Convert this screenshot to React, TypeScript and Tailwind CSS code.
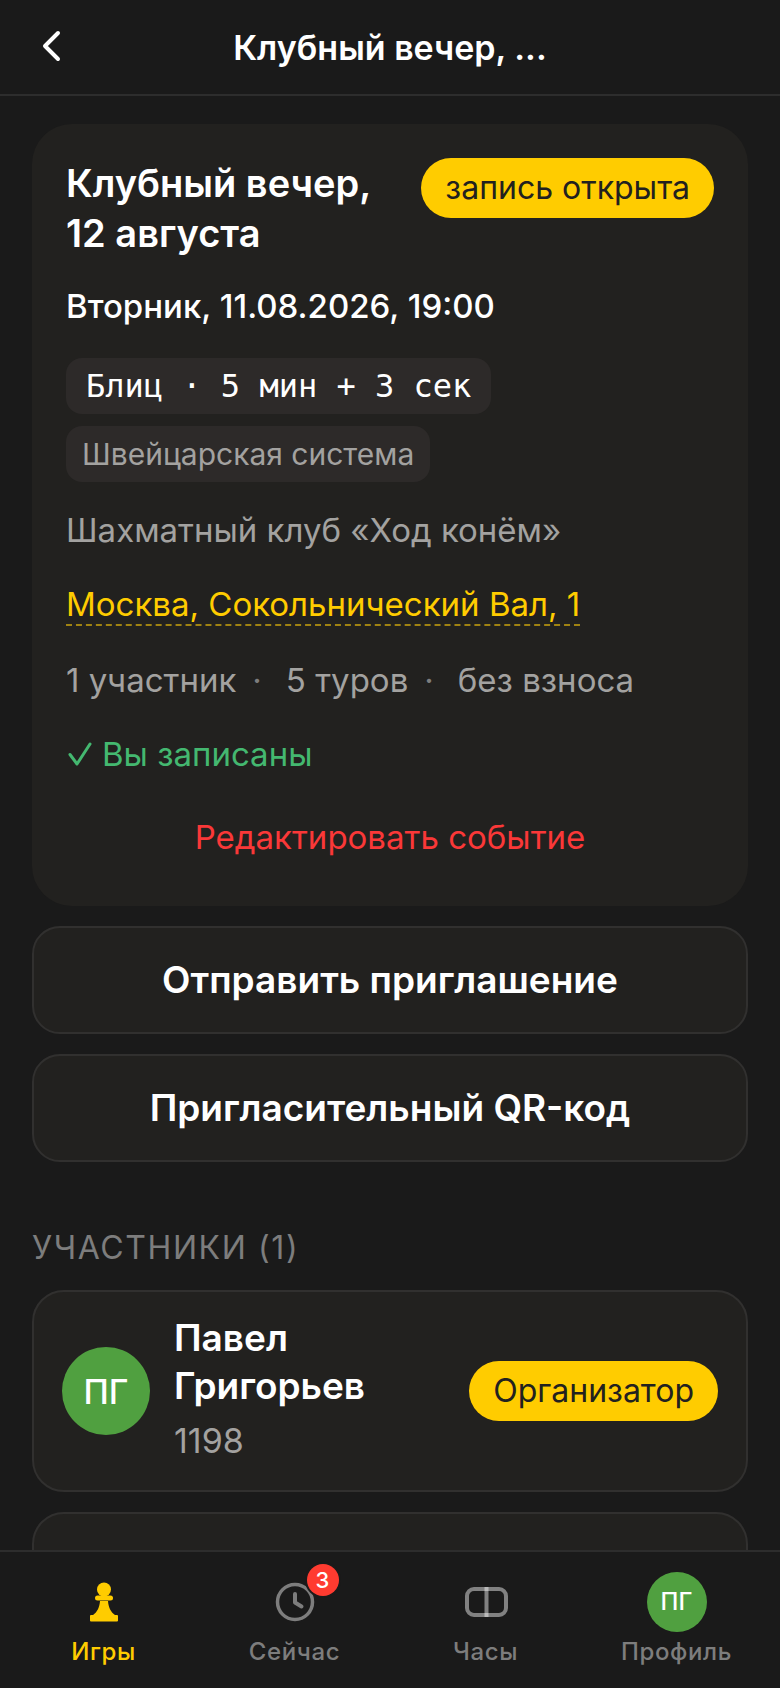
import type { ReactNode } from "react";

type Tab = {
    label: string;
    icon: ReactNode;
    active?: boolean;
    badge?: number;
};

function PawnIcon() {
    return (
        <svg width="48" height="48" viewBox="0 0 48 48" fill="currentColor" aria-hidden="true">
            <circle cx="24" cy="11.500" r="7" />
            <rect x="15" y="17.500" width="18" height="5" rx="2.500" />
            <path d="M20 23h8c.4 6 2.600 11 7 14h2a1 1 0 0 1 1 1v4.500a1 1 0 0 1-1 1h-26a1 1 0 0 1-1-1v-4.500a1 1 0 0 1 1-1h2c4.400-3 6.600-8 7-14z" />
        </svg>
    );
}

function NowIcon() {
    return (
        <svg width="48" height="48" viewBox="0 0 48 48" fill="none" stroke="currentColor" strokeLinecap="round" strokeLinejoin="round" aria-hidden="true">
            <circle cx="24" cy="24" r="17.500" strokeWidth="3.500" />
            <path d="M24 16v8.500l6.500 4" strokeWidth="4" />
        </svg>
    );
}

function ChessClockIcon() {
    return (
        <svg width="48" height="48" viewBox="0 0 48 48" fill="none" stroke="#ffffff" strokeOpacity="0.45" strokeWidth="4" aria-hidden="true">
            <rect x="5" y="11" width="39" height="26" rx="7" />
            <path d="M24.500 9v30" />
        </svg>
    );
}

const tabs: Tab[] = [
    { label: "Игры", icon: <PawnIcon />, active: true },
    { label: "Сейчас", icon: <NowIcon />, badge: 3 },
    { label: "Часы", icon: <ChessClockIcon /> },
    {
        label: "Профиль",
        icon: (
            <span className="flex size-[60px] items-center justify-center rounded-full bg-[#50a040] text-[24px] font-medium tracking-normal text-white">
                ПГ
            </span>
        ),
    },
];

const stats = ["1 участник", "5 туров", "без взноса"];

function Pill({ children }: { children: ReactNode }) {
    return (
        <span className="flex h-[60px] shrink-0 items-center rounded-full bg-[#ffcc00] px-6 text-[32px] text-[#22211f]">
            {children}
        </span>
    );
}

function ActionButton({ children }: { children: ReactNode }) {
    return (
        <button
            type="button"
            className="h-[108px] w-full rounded-[28px] border-2 border-[#31302f] bg-[#22211f] text-[37px] font-semibold"
        >
            {children}
        </button>
    );
}

function EventCard() {
    return (
        <section className="rounded-[40px] bg-[#22211f] px-[34px] pt-[34px] pb-7">
            <div className="flex items-start justify-between gap-4">
                <h2 className="text-[38px] leading-[50px] font-semibold">
                    Клубный вечер, 12 августа
                </h2>
                <Pill>запись открыта</Pill>
            </div>

            <p className="mt-6 text-[33px] leading-[48px] font-medium">Вторник, 11.08.2026, 19:00</p>

            <div className="mt-7 flex flex-col items-start gap-3">
                <span className="flex h-14 items-center rounded-2xl bg-[#2d2a29] px-5 font-['DejaVu_Sans_Mono',monospace] text-[32px]">
                    Блиц · 5 мин + 3 сек
                </span>
                <span className="flex h-14 items-center rounded-2xl bg-[#2d2a29] px-4 text-[30px] text-[#a3a2a0]">
                    Швейцарская система
                </span>
            </div>

            <p className="mt-6 text-[33px] leading-[48px] text-[#a3a2a0]">Шахматный клуб «Ход конём»</p>

            <p className="mt-[26px] text-[33px] leading-[48px]">
                <a href="#map" className="border-b-2 border-dashed border-[#a08312] text-[#ffcc00]">
                    Москва, Сокольнический Вал, 1
                </a>
            </p>

            <ul className="mt-7 flex text-[33px] leading-[48px] text-[#a3a2a0]">
                {stats.map((item, index) => (
                    <li key={item} className="flex">
                        {index > 0 && <span className="mr-6 ml-4 text-[#7d7d7d]">·</span>}
                        {item}
                    </li>
                ))}
            </ul>

            <p className="mt-[26px] flex items-center gap-2 text-[33px] leading-[48px] text-[#44b870]">
                <svg width="28" height="28" viewBox="0 0 28 28" fill="none" stroke="currentColor" strokeWidth="3" strokeLinecap="round" strokeLinejoin="round" aria-hidden="true">
                    <path d="M4 14.500l7 9.500L24 4" />
                </svg>
                Вы записаны
            </p>

            <button type="button" className="mt-5 h-20 w-full text-[33px] text-[#fa3838]">
                Редактировать событие
            </button>
        </section>
    );
}

function TabBar() {
    return (
        <nav className="flex h-[138px] shrink-0 border-t-2 border-[#2d2d2d] bg-[#1a1a1a] px-2 pt-5">
            {tabs.map((tab) => (
                <a
                    key={tab.label}
                    href="#tab"
                    className={`flex flex-1 flex-col items-center gap-1 text-[24px] leading-8 font-medium tracking-wide ${tab.active ? "text-[#ffcc00]" : "text-[#7d7d7d]"}`}
                >
                    <span className="relative flex h-[60px] items-center">
                        {tab.icon}
                        {tab.badge && (
                            <span className="absolute -top-2 -right-5 flex size-8 items-center justify-center rounded-full bg-[#ff3b30] text-[22px] font-medium tracking-normal text-white ring-2 ring-[#1a1a1a]">
                                {tab.badge}
                            </span>
                        )}
                    </span>
                    {tab.label}
                </a>
            ))}
        </nav>
    );
}

export default function App() {
    return (
        <div className="flex h-screen flex-col bg-[#1a1a1a] font-['Inter',sans-serif] text-white">
            <header className="grid h-24 shrink-0 grid-cols-[1fr_2fr_1fr] items-center border-b-2 border-[#2d2d2d] px-8">
                <button type="button" aria-label="Назад" className="flex size-10 items-center justify-center">
                    <svg width="40" height="40" viewBox="0 0 40 40" fill="none" stroke="currentColor" strokeWidth="4" strokeLinecap="round" strokeLinejoin="round" aria-hidden="true">
                        <path d="M26 6L13 19L26 32" />
                    </svg>
                </button>
                <h1 className="truncate text-center text-[34px] font-semibold">Клубный вечер, ...</h1>
            </header>

            <main className="flex-1 overflow-y-auto px-8 pt-7 [scrollbar-width:none]">
                <div className="flex flex-col gap-5">
                    <EventCard />
                    <ActionButton>Отправить приглашение</ActionButton>
                    <ActionButton>Пригласительный QR-код</ActionButton>
                </div>

                <h2 className="mt-[60px] mb-4 text-[32px] leading-[52px] tracking-wider text-[#7d7d7d] uppercase">
                    Участники (1)
                </h2>
                <ul className="flex flex-col gap-5">
                    <li className="flex items-center gap-6 rounded-[32px] border-2 border-[#31302f] bg-[#22211f] px-7 py-[22px]">
                        <span className="flex size-[88px] shrink-0 items-center justify-center rounded-full bg-[#50a040] text-[34px] font-medium">
                            ПГ
                        </span>
                        <div className="min-w-0 flex-1">
                            <p className="w-min text-[37px] leading-[48px] font-semibold">Павел Григорьев</p>
                            <p className="mt-1 text-[34px] leading-[54px] text-[#a3a2a0]">1198</p>
                        </div>
                        <Pill>Организатор</Pill>
                    </li>
                    <li className="h-[202px] rounded-[32px] border-2 border-[#31302f] bg-[#22211f]" />
                </ul>
            </main>

            <TabBar />
        </div>
    );
}
